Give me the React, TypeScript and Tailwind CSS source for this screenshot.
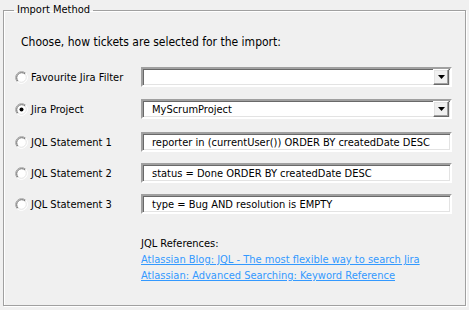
import React from 'react';

const font = { fontFamily: '"DejaVu Sans Condensed", "DejaVu Sans", Tahoma, sans-serif' };

const Radio = ({ checked }: { checked?: boolean }) => (
  <svg width="13" height="13" viewBox="0 0 13 13" className="shrink-0">
    <circle cx="6.5" cy="6.5" r="6" fill="#ffffff" />
    <path d="M2.26 10.74 A6 6 0 0 1 10.74 2.26" fill="none" stroke="#a0a0a0" strokeWidth="1" />
    <path d="M10.74 2.26 A6 6 0 0 1 2.26 10.74" fill="none" stroke="#ffffff" strokeWidth="1" />
    <path d="M2.97 10.03 A5 5 0 0 1 10.03 2.97" fill="none" stroke="#696969" strokeWidth="1" />
    <path d="M10.03 2.97 A5 5 0 0 1 2.97 10.03" fill="none" stroke="#e3e3e3" strokeWidth="1" />
    {checked && <circle cx="6.5" cy="6.5" r="2" fill="#000000" />}
  </svg>
);

const sunken =
  'h-[20px] w-[311px] border-2 border-t-[#a0a0a0] border-l-[#a0a0a0] border-b-white border-r-white bg-white shadow-[inset_1px_1px_0_#696969,inset_-1px_-1px_0_#e3e3e3]';

const ComboBox = ({ value }: { value?: string }) => (
  <div className={`${sunken} flex items-center`}>
    <span className="flex-1 pl-[9px] text-[11px] leading-none text-black truncate">{value}</span>
    <div className="mr-[1px] flex h-[16px] w-[16px] items-center justify-center border border-t-white border-l-white border-b-[#696969] border-r-[#696969] bg-[#f0f0f0] shadow-[inset_-1px_-1px_0_#a0a0a0,inset_1px_1px_0_#e3e3e3]">
      <svg width="7" height="4" viewBox="0 0 7 4">
        <path d="M0 0 H7 L3.5 4 Z" fill="#000000" />
      </svg>
    </div>
  </div>
);

const TextBox = ({ value }: { value: string }) => (
  <div className={`${sunken} flex items-center`}>
    <span className="pl-[9px] text-[11px] leading-none text-black whitespace-nowrap">{value}</span>
  </div>
);

type Row = { label: string; checked?: boolean; field: React.ReactNode; mt: string };

const rows: Row[] = [
  { label: 'Favourite Jira Filter', field: <ComboBox />, mt: 'mt-[17px]' },
  { label: 'Jira Project', checked: true, field: <ComboBox value="MyScrumProject" />, mt: 'mt-[12px]' },
  { label: 'JQL Statement 1', field: <TextBox value="reporter in (currentUser()) ORDER BY createdDate DESC" />, mt: 'mt-[13px]' },
  { label: 'JQL Statement 2', field: <TextBox value="status = Done ORDER BY createdDate DESC" />, mt: 'mt-[11px]' },
  { label: 'JQL Statement 3', field: <TextBox value="type = Bug AND resolution is EMPTY" />, mt: 'mt-[11px]' },
];

export default function App() {
  return (
    <div className="h-[310px] w-[469px] bg-[#f0f0f0] pt-[3px] pl-[3px] text-black" style={font}>
      <fieldset className="m-0 h-[303px] w-[463px] border border-[#a0a0a0] p-0 shadow-[1px_1px_0_#ffffff,inset_1px_1px_0_#ffffff]">
        <legend className="ml-[10px] px-[3px] text-[11px] leading-[14px]">Import Method</legend>
        <div className="pl-[17px] pt-[18px] text-[12px] leading-[15px] whitespace-nowrap">
          Choose, how tickets are selected for the import:
        </div>
        <div className="flex flex-col">
          {rows.map((r) => (
            <div key={r.label} className={`flex items-center ${r.mt}`}>
              <div className="flex w-[137px] items-center pl-[11px]">
                <Radio checked={r.checked} />
                <span className="ml-[3px] text-[11px] leading-none">{r.label}</span>
              </div>
              {r.field}
            </div>
          ))}
        </div>
        <div className="mt-[22px] flex flex-col items-start pl-[137px] text-[11px] leading-[16px] whitespace-nowrap">
          <span>JQL References:</span>
          <a href="#" className="text-[#3399ff] underline">
            Atlassian Blog: JQL - The most flexible way to search Jira
          </a>
          <a href="#" className="text-[#3399ff] underline">
            Atlassian: Advanced Searching: Keyword Reference
          </a>
        </div>
      </fieldset>
    </div>
  );
}
